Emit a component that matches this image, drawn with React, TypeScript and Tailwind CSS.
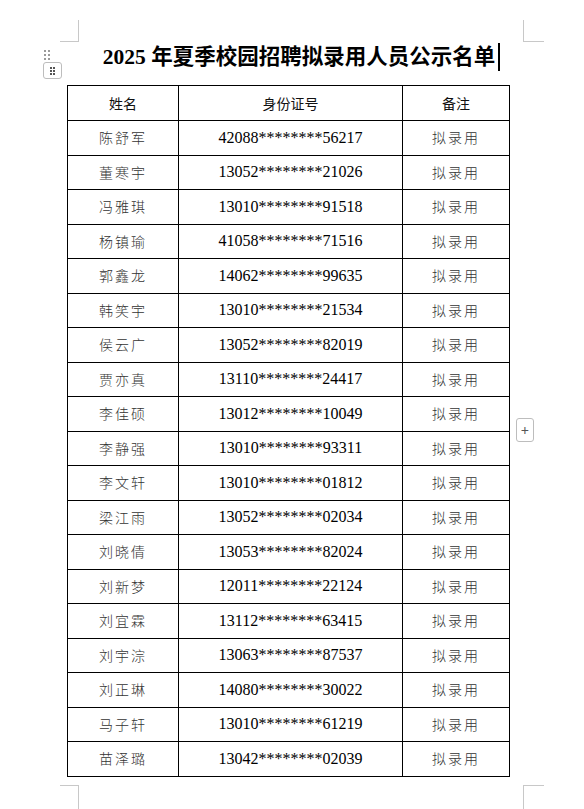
import React from "react";

const rows: [string, string][] = [
  ["陈舒军", "42088********56217"],
  ["董寒宇", "13052********21026"],
  ["冯雅琪", "13010********91518"],
  ["杨镇瑜", "41058********71516"],
  ["郭鑫龙", "14062********99635"],
  ["韩笑宇", "13010********21534"],
  ["侯云广", "13052********82019"],
  ["贾亦真", "13110********24417"],
  ["李佳硕", "13012********10049"],
  ["李静强", "13010********93311"],
  ["李文轩", "13010********01812"],
  ["梁江雨", "13052********02034"],
  ["刘晓倩", "13053********82024"],
  ["刘新梦", "12011********22124"],
  ["刘宜霖", "13112********63415"],
  ["刘宇淙", "13063********87537"],
  ["刘正琳", "14080********30022"],
  ["马子轩", "13010********61219"],
  ["苗泽璐", "13042********02039"],
];

const cjk = { fontFamily: '"Noto Sans CJK SC", sans-serif' };
const serif = { fontFamily: '"Liberation Serif", "Noto Sans CJK SC", serif' };

export default function App() {
  return (
    <div className="relative w-[584px] h-[809px] bg-white overflow-hidden">
      {/* corner marks */}
      <div className="absolute left-[60px] top-[20px] w-[19px] h-[22px] border-r border-b border-[#c8c8c8]" />
      <div className="absolute left-[523px] top-[20px] w-[21px] h-[22px] border-l border-b border-[#c8c8c8]" />
      <div className="absolute left-[60px] top-[785px] w-[19px] h-[24px] border-r border-t border-[#c8c8c8]" />
      <div className="absolute left-[523px] top-[785px] w-[21px] h-[24px] border-l border-t border-[#c8c8c8]" />

      {/* drag handle */}
      <div className="absolute left-[44px] top-[50px] grid grid-cols-2 gap-x-[2px] gap-y-[2px]">
        {Array.from({ length: 6 }).map((_, i) => (
          <div key={i} className="w-[2px] h-[2px] bg-[#9a9a9a]" />
        ))}
      </div>
      <div className="absolute left-[43px] top-[62px] w-[19px] h-[17px] rounded-[3px] border border-[#bdbdbd] bg-white flex items-center justify-center">
        <div className="grid grid-cols-2 gap-x-[1px] gap-y-[1px]">
          {Array.from({ length: 6 }).map((_, i) => (
            <div key={i} className="w-[2px] h-[2px] bg-[#555]" />
          ))}
        </div>
      </div>

      {/* plus button */}
      <div className="absolute left-[516px] top-[418px] w-[18px] h-[24px] rounded-[3px] border border-[#bdbdbd] bg-white flex items-center justify-center text-[#555] text-[14px] leading-none" style={cjk}>
        +
      </div>

      {/* title */}
      <div className="pt-[43px] pl-[79px] w-[524px] flex justify-center items-center">
        <div className="text-[21.5px] leading-[28px] font-bold text-black whitespace-nowrap" style={serif}>
          2025 年夏季校园招聘拟录用人员公示名单
        </div>
        <div className="w-[2px] h-[28px] bg-black ml-[3px]" />
      </div>

      {/* table */}
      <table className="ml-[67px] mt-[14px] w-[442px] border-collapse table-fixed">
        <colgroup>
          <col className="w-[111px]" />
          <col className="w-[224px]" />
          <col className="w-[107px]" />
        </colgroup>
        <thead>
          <tr className="h-[35px]">
            <th className="border border-black font-normal text-[14px] text-[#111]" style={cjk}>姓名</th>
            <th className="border border-black font-normal text-[14px] text-[#111]" style={cjk}>身份证号</th>
            <th className="border border-black font-normal text-[14px] text-[#111]" style={cjk}>备注</th>
          </tr>
        </thead>
        <tbody>
          {rows.map(([name, id]) => (
            <tr key={name} className="h-[34.5px]">
              <td className="border border-black text-center text-[14px] tracking-[2px] text-[#333] font-light" style={cjk}>
                {name}
              </td>
              <td className="border border-black text-center text-[16px] text-black" style={serif}>
                {id}
              </td>
              <td className="border border-black text-center text-[14px] tracking-[2px] text-[#333] font-light" style={cjk}>
                拟录用
              </td>
            </tr>
          ))}
        </tbody>
      </table>
    </div>
  );
}
